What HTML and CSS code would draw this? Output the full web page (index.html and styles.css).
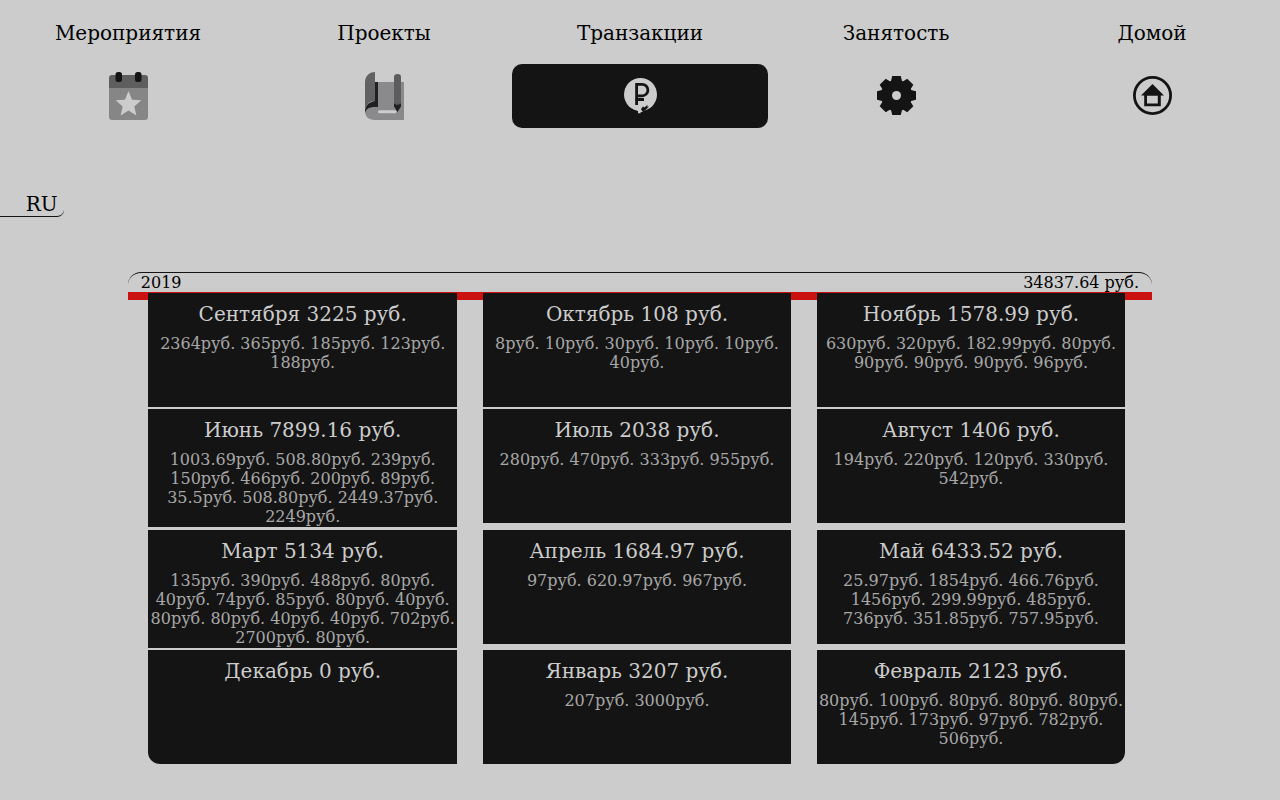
FILE: index.html
```html
<!DOCTYPE html>
<html lang="ru">
<head>
<meta charset="utf-8">
<title>Транзакции</title>
<link rel="stylesheet" href="styles.css">
</head>
<body>
<nav class="nav">
  <a class="nav-item"><span class="nav-label">Мероприятия</span><span class="nav-icon">
    <svg width="40" height="64" viewBox="0 0 40 64"><path fill="#868686" d="M1 22h39v31q0 3-3 3H4q-3 0-3-3z"/><path fill="#5e5e5e" d="M1 24V14q0-3 3-3h33q3 0 3 3v10z"/><rect x="7.500" y="8" width="6.500" height="10" rx="2.500" fill="#141414"/><rect x="27" y="8" width="6.500" height="10" rx="2.500" fill="#141414"/><path fill="#ccc" d="M20.500 27l3.500 8.800 9.300.5-7 6.100 2.100 9-7.900-4.800-7.900 4.800 2.100-9-7-6.100 9.300-.5z"/></svg></span></a>
  <a class="nav-item"><span class="nav-label">Проекты</span><span class="nav-icon">
    <svg width="40" height="64" viewBox="0 0 40 64"><path fill="#8a8a8c" d="M11 18h29v38H11C4 56 1 52 1 47q3-5 10-6z"/><path fill="#626264" d="M11 8v29C5 37 1 42 1 47V19C1 12 5 8 11 8z"/><path fill="#202024" d="M11 18h3v25h-3C5 43 2 45 1 49v-3c1-5 4-8 10-9z"/><path d="M15.500 47.700H31" stroke="#ccc" stroke-width="3" stroke-linecap="round"/><path fill="#5c5c5c" d="M30 40V13q0-3 3.500-3t3.500 3v27z"/><path fill="#202024" d="M30 39.500q3.500 2 7 0v3L33.500 48 30 42.500z"/></svg></span></a>
  <a class="nav-item active"><span class="nav-label">Транзакции</span><span class="nav-icon">
    <svg width="40" height="64" viewBox="0 0 40 64"><circle cx="20.500" cy="30.500" r="16.500" fill="#ccc"/><path d="M16.600 41V20.400h5.600a5.700 5.700 0 0 1 0 11.400H16.600M15.100 35.500h8.900" fill="none" stroke="#141414" stroke-width="2.800"/><path fill="#141414" d="M21.500 48l-.5-3 2-2.500 1.500 1 3-2.800-.3 2 1.800-.2-3.500 3.500z"/><path fill="#ccc" d="M16.500 45h4.500l1 2h1l-1 1-1.500.3v1H18V47z"/></svg></span></a>
  <a class="nav-item"><span class="nav-label">Занятость</span><span class="nav-icon">
    <svg width="40" height="64" viewBox="0 0 40 64"><g fill="#141414"><circle cx="20.500" cy="31.500" r="15.600"/><g id="teeth"><path id="tooth" d="M14.800 18l1.400-6h8.600l1.400 6v27l-1.400 6h-8.600l-1.400-6z"/><use href="#tooth" transform="rotate(90 20.500 31.500)"/></g><use href="#teeth" transform="rotate(45 20.500 31.500)"/></g><circle cx="20.500" cy="31.500" r="4.500" fill="#ccc"/></svg></span></a>
  <a class="nav-item"><span class="nav-label">Домой</span><span class="nav-icon">
    <svg width="40" height="64" viewBox="0 0 40 64"><circle cx="20.500" cy="31.500" r="18.100" fill="none" stroke="#141414" stroke-width="2.800"/><path fill="#141414" fill-rule="evenodd" d="M20.500 20l11.500 11.500h-3.200V42.300H12.200V31.500H9zM15 31.800v7.700h10.800v-7.700z"/></svg></span></a>
</nav>
<div class="lang">RU</div>
<main class="year">
  <header class="year-head"><span>2019</span><span>34837.64 руб.</span></header>
  <div class="months">
    <section class="card"><h2>Сентября 3225 руб.</h2><p>2364руб. 365руб. 185руб. 123руб. 188руб.</p></section>
    <section class="card"><h2>Октябрь 108 руб.</h2><p>8руб. 10руб. 30руб. 10руб. 10руб. 40руб.</p></section>
    <section class="card"><h2>Ноябрь 1578.99 руб.</h2><p>630руб. 320руб. 182.99руб. 80руб. 90руб. 90руб. 90руб. 96руб.</p></section>
    <section class="card"><h2>Июнь 7899.16 руб.</h2><p>1003.69руб. 508.80руб. 239руб. 150руб. 466руб. 200руб. 89руб. 35.5руб. 508.80руб. 2449.37руб. 2249руб.</p></section>
    <section class="card"><h2>Июль 2038 руб.</h2><p>280руб. 470руб. 333руб. 955руб.</p></section>
    <section class="card"><h2>Август 1406 руб.</h2><p>194руб. 220руб. 120руб. 330руб. 542руб.</p></section>
    <section class="card"><h2>Март 5134 руб.</h2><p>135руб. 390руб. 488руб. 80руб. 40руб. 74руб. 85руб. 80руб. 40руб. 80руб. 80руб. 40руб. 40руб. 702руб. 2700руб. 80руб.</p></section>
    <section class="card"><h2>Апрель 1684.97 руб.</h2><p>97руб. 620.97руб. 967руб.</p></section>
    <section class="card"><h2>Май 6433.52 руб.</h2><p>25.97руб. 1854руб. 466.76руб. 1456руб. 299.99руб. 485руб. 736руб. 351.85руб. 757.95руб.</p></section>
    <section class="card first"><h2>Декабрь 0 руб.</h2></section>
    <section class="card"><h2>Январь 3207 руб.</h2><p>207руб. 3000руб.</p></section>
    <section class="card last"><h2>Февраль 2123 руб.</h2><p>80руб. 100руб. 80руб. 80руб. 80руб. 145руб. 173руб. 97руб. 782руб. 506руб.</p></section>
  </div>
</main>
</body>
</html>
```

FILE: styles.css
```css
* { box-sizing: border-box; }
body {
  margin: 0;
  height: 800px;
  overflow: hidden;
  background: #ccc;
  color: #000;
  font: 16px/19px "DejaVu Serif", serif;
}
.nav { display: grid; grid-template-columns: repeat(5, 1fr); }
.nav-item { display: block; text-align: center; }
.nav-label { display: block; height: 64px; padding-top: 1px; font-size: 20px; line-height: 64px; }
.nav-icon { display: flex; justify-content: center; height: 64px; border-radius: 10px; }
.active .nav-icon { background: #141414; }
.lang {
  width: 64px;
  height: 25px;
  margin-top: 64px;
  padding-right: 6.4px;
  border-bottom: 1px solid #141414;
  border-bottom-right-radius: 7px;
  font-size: 20px;
  line-height: 24px;
  text-align: right;
}
.year { width: 1024px; margin: 55px auto 0; }
.year-head {
  display: flex;
  justify-content: space-between;
  height: 20px;
  padding: 0 13px 0 12.8px;
  border-top: 1px solid #141414;
  border-radius: 13px 13px 0 0;
}
.months {
  display: grid;
  grid-template-columns: 308.6px 308px 308px;
  grid-template-rows: 116px 121px 120px 114px;
  column-gap: 26px;
  align-items: start;
  padding: 1px 0 0 20.4px;
  background: linear-gradient(#c11, #c11) 0 0 / 100% 8px no-repeat;
}
.card {
  min-height: 114px;
  padding: 9px 0 1px;
  background: #141414;
  color: #ccc;
  text-align: center;
}
.card h2 { margin: 0 0 8px; font-size: 20px; font-weight: normal; line-height: 24px; }
.card p { margin: 0; opacity: .8; }
.first { border-bottom-left-radius: 12px; }
.last { border-bottom-right-radius: 12px; }
```
